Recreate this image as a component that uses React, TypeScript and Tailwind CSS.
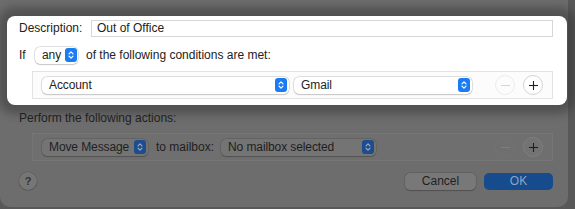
import React from 'react'

function Stepper({ dim }: { dim?: boolean }) {
  return (
    <span
      className={`flex h-[14px] w-[12px] shrink-0 items-center justify-center rounded-[3px] ${
        dim ? 'bg-[#1d4d8c]' : 'bg-[#1a7cf5]'
      }`}
    >
      <svg width="8" height="10" viewBox="0 0 8 10" fill="none">
        <path
          d="M2 3.8 L4 1.8 L6 3.8 M2 6.2 L4 8.2 L6 6.2"
          stroke={dim ? '#9aaac0' : '#ffffff'}
          strokeWidth="1.2"
          strokeLinecap="round"
          strokeLinejoin="round"
        />
      </svg>
    </span>
  )
}

function Popup({ label, width, dim }: { label: string; width: string; dim?: boolean }) {
  return (
    <div
      className={`flex h-[17px] items-center justify-between gap-[4px] rounded-[5px] pl-[7px] pr-[2px] ${width} ${
        dim
          ? 'bg-[#747474] shadow-[0_0_0_0.5px_rgba(0,0,0,0.15),0_0.5px_1px_rgba(0,0,0,0.2)]'
          : 'bg-white shadow-[0_0_0_0.5px_rgba(0,0,0,0.18),0_0.5px_1.5px_rgba(0,0,0,0.15)]'
      }`}
    >
      <span className="whitespace-nowrap leading-none tracking-[-0.1px]">{label}</span>
      <Stepper dim={dim} />
    </div>
  )
}

function RoundBtn({ sign, dim, disabled }: { sign: '-' | '+'; dim?: boolean; disabled?: boolean }) {
  const stroke = dim ? (disabled ? '#7c7c7c' : '#1e1e1e') : disabled ? '#d6d6d6' : '#1e1e1e'
  return (
    <div
      className={`flex h-[20px] w-[20px] items-center justify-center rounded-full ${
        dim
          ? disabled
            ? 'border border-[#737373]'
            : 'border border-[#7e7e7e] bg-[#737373]'
          : disabled
            ? 'border border-[#ececec]'
            : 'border border-[#d4d4d4] bg-white'
      }`}
    >
      <svg width="11" height="11" viewBox="0 0 11 11">
        <path d="M1 5.5 H10" stroke={stroke} strokeWidth="1.1" />
        {sign === '+' && <path d="M5.5 1 V10" stroke={stroke} strokeWidth="1.1" />}
      </svg>
    </div>
  )
}

export default function App() {
  return (
    <div
      className="h-[209px] w-[575px] overflow-hidden bg-[#585858] text-[12px] text-[#1f1f1f]"
      style={{ fontFamily: '"Liberation Sans", Arial, sans-serif' }}
    >
      <div className="flex h-[207px] w-[568px] flex-col rounded-b-[10px] bg-[#6d6d6d] pt-[16px]">
        {/* Highlighted area */}
        <div className="relative ml-[7px] flex h-[89px] w-[560px] flex-col rounded-[8px] bg-white pl-[12px] pr-[14px] pt-[4px] text-[#222] shadow-[0_0_8px_9px_rgba(40,40,40,0.4)]">
          <div className="flex h-[16px] items-center">
            <span className="w-[72px]">Description:</span>
            <div className="flex h-[17px] flex-1 items-center border border-[#d6d6d6] pl-[5px]">
              Out of Office
            </div>
          </div>
          <div className="mt-[11px] flex h-[16px] items-center">
            <span className="w-[16px]">If</span>
            <Popup label="any" width="w-[43px]" />
            <span className="ml-[8px]">of the following conditions are met:</span>
          </div>
          <div className="ml-[13px] mt-[8px] flex h-[28px] items-center border border-[#e3e3e3] bg-[#fcfcfc] pl-[9px] pr-[9px]">
            <Popup label="Account" width="w-[247px]" />
            <div className="ml-[5px]">
              <Popup label="Gmail" width="w-[178px]" />
            </div>
            <div className="ml-auto flex gap-[8px]">
              <RoundBtn sign="-" disabled />
              <RoundBtn sign="+" />
            </div>
          </div>
        </div>

        {/* Dimmed area */}
        <div className="flex flex-1 flex-col pl-[19px] pr-[15px]">
          <div className="mt-[6px] flex h-[14px] items-center">Perform the following actions:</div>
          <div className="ml-[13px] mt-[8px] flex h-[28px] items-center border border-[#767676] bg-[#6f6f6f] pl-[9px] pr-[9px]">
            <Popup label="Move Message" width="w-[106px]" dim />
            <span className="ml-[8px]">to mailbox:</span>
            <div className="ml-[7px]">
              <Popup label="No mailbox selected" width="w-[155px]" dim />
            </div>
            <div className="ml-auto flex gap-[8px]">
              <RoundBtn sign="-" dim disabled />
              <RoundBtn sign="+" dim />
            </div>
          </div>
          <div className="mt-[11px] flex h-[18px] items-center">
            <div className="flex h-[18px] w-[18px] items-center justify-center rounded-full bg-[#767676] text-[11px] font-bold text-[#333] shadow-[0_0_0_0.5px_rgba(0,0,0,0.15),0_0.5px_1px_rgba(0,0,0,0.2)]">
              ?
            </div>
            <div className="ml-auto flex gap-[8px]">
              <div className="flex h-[17px] w-[71px] items-center justify-center rounded-[5px] bg-[#787878] shadow-[0_0_0_0.5px_rgba(0,0,0,0.15),0_0.5px_1px_rgba(0,0,0,0.2)]">
                Cancel
              </div>
              <div className="flex h-[17px] w-[69px] items-center justify-center rounded-[5px] bg-[#164b8e] text-[#8ea4c2]">
                OK
              </div>
            </div>
          </div>
        </div>
      </div>
    </div>
  )
}
